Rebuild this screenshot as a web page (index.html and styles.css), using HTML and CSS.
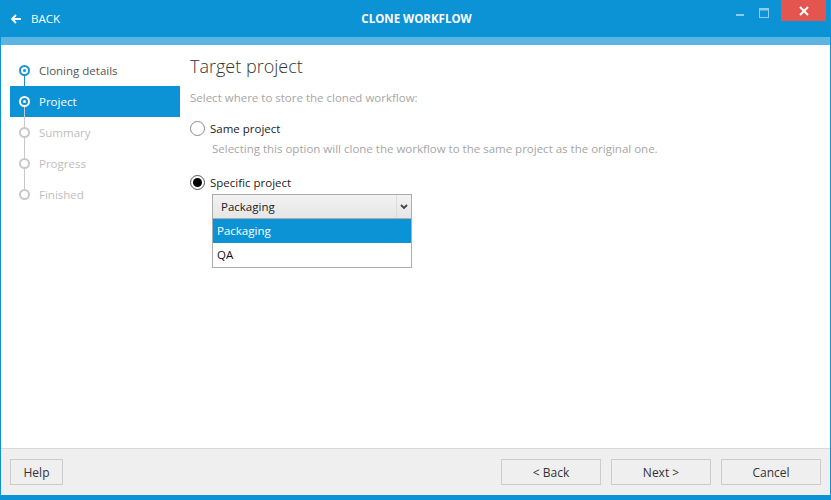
FILE: index.html
```html
<!DOCTYPE html>
<html>
<head>
<meta charset="utf-8">
<link rel="stylesheet" href="styles.css">
</head>
<body>
<div class="window">
  <header class="titlebar">
    <div class="back">
      <svg class="back-arrow" width="11" height="10" viewBox="0 0 11 10"><path d="M5 1 L1 5 L5 9 M1 5 H10" fill="none" stroke="#fff" stroke-width="1.8"/></svg>
      <span>BACK</span>
    </div>
    <div class="title">CLONE WORKFLOW</div>
    <div class="controls">
      <span class="ctl min"><svg width="8" height="3" viewBox="0 0 8 3"><rect x="0" y="0" width="8" height="2" fill="#8fcbed"/></svg></span>
      <span class="ctl max"><svg width="10" height="10" viewBox="0 0 10 10"><rect x="0.5" y="0.5" width="9" height="9" fill="none" stroke="#8fcbed" stroke-width="1"/><rect x="0.5" y="0.5" width="9" height="2" fill="#8fcbed"/></svg></span>
      <span class="ctl close"><svg width="10" height="10" viewBox="0 0 10 10"><path d="M1 1 L9 9 M9 1 L1 9" stroke="#fff" stroke-width="2"/></svg></span>
    </div>
  </header>
  <div class="strip"></div>
  <div class="body">
    <nav class="steps">
      <div class="step done"><span class="dot"></span><span class="label">Cloning details</span></div>
      <div class="step current"><span class="dot"></span><span class="label">Project</span></div>
      <div class="step todo"><span class="dot"></span><span class="label">Summary</span></div>
      <div class="step todo"><span class="dot"></span><span class="label">Progress</span></div>
      <div class="step todo last"><span class="dot"></span><span class="label">Finished</span></div>
    </nav>
    <main class="main">
      <h1 class="heading">Target project</h1>
      <p class="hint">Select where to store the cloned workflow:</p>
      <label class="radio"><span class="rb"></span><span>Same project</span></label>
      <p class="desc">Selecting this option will clone the workflow to the same project as the original one.</p>
      <label class="radio second"><span class="rb checked"></span><span>Specific project</span></label>
      <div class="combo">
        <div class="combo-box">
          <span class="combo-value">Packaging</span>
          <span class="combo-toggle"><svg width="8" height="6" viewBox="0 0 8 6"><path d="M1 1 L4 4 L7 1" fill="none" stroke="#444" stroke-width="1.8"/></svg></span>
        </div>
        <ul class="combo-list">
          <li class="sel">Packaging</li>
          <li>QA</li>
        </ul>
      </div>
    </main>
  </div>
  <footer class="footer">
    <button class="btn help">Help</button>
    <div class="nav-btns">
      <button class="btn wide">&lt; Back</button>
      <button class="btn wide">Next &gt;</button>
      <button class="btn wide">Cancel</button>
    </div>
  </footer>
</div>
</body>
</html>
```

FILE: styles.css
```css
* { box-sizing: border-box; }
html, body { margin: 0; padding: 0; }
body {
  width: 831px;
  height: 500px;
  font-family: "Segoe UI", "Open Sans", "Noto Sans", sans-serif;
  font-size: 11.5px;
  color: #333;
  overflow: hidden;
}
.window {
  width: 831px;
  height: 500px;
  display: flex;
  flex-direction: column;
  background: #0b93d5;
  padding: 0 1px 5px 1px;
}
.titlebar {
  height: 37px;
  display: grid;
  grid-template-columns: 1fr auto 1fr;
  align-items: start;
  color: #fff;
}
.back {
  display: flex;
  align-items: center;
  gap: 9px;
  height: 37px;
  padding-left: 10px;
  font-size: 11.5px;
}
.title {
  text-align: center;
  font-weight: bold;
  font-size: 11.5px;
  line-height: 37px;
  padding-left: 2px;
}
.controls {
  display: flex;
  justify-content: flex-end;
  align-items: flex-start;
  height: 37px;
  margin-right: 4px;
}
.ctl {
  display: flex;
  align-items: center;
  justify-content: center;
}
.ctl.min { width: 16px; height: 21px; align-items: flex-end; padding-bottom: 4px; margin-right: 8px; }
.ctl.max { width: 16px; height: 21px; padding-top: 5px; margin-right: 9px; }
.ctl.close { width: 45px; height: 21px; background: #e5554f; }
.strip { height: 8px; background: #5ab5e3; }
.body {
  flex: 1;
  display: flex;
  background: #fff;
}
.steps {
  width: 179px;
  padding: 10px 0 0 9px;
  display: flex;
  flex-direction: column;
}
.step {
  height: 31px;
  display: flex;
  align-items: center;
  position: relative;
  padding-left: 9px;
}
.step .dot {
  width: 11px;
  height: 11px;
  border-radius: 50%;
  border: 2px solid #1a93d4;
  background: #fff;
  position: relative;
  z-index: 1;
  display: flex;
  align-items: center;
  justify-content: center;
}
.step .dot::after {
  content: "";
  width: 3px;
  height: 3px;
  border-radius: 50%;
  background: #1a93d4;
}
.step::before {
  content: "";
  position: absolute;
  left: 14px;
  top: 20px;
  height: 31px;
  width: 1px;
  background: #c8c8c8;
}
.step.done::before { background: #1a93d4; }
.step.last::before { display: none; }
.step .label { margin-left: 9px; }
.step.done .label { color: #555; }
.step.current { background: #0b93d5; }
.step.current .label { color: #fff; }
.step.current .dot { border-color: #fff; background: #0b93d5; }
.step.current .dot::after { background: #fff; }
.step.todo .label { color: #bdbdbd; }
.step.todo .dot { border-color: #c8c8c8; }
.step.todo .dot::after { display: none; }
.main {
  flex: 1;
  padding: 8px 0 0 10px;
}
.heading {
  margin: 0;
  font-weight: 300;
  font-size: 18px;
  line-height: 26px;
  color: #333;
}
.hint {
  margin: 11px 0 0 0;
  color: #a6a6a6;
  line-height: 16px;
}
.radio {
  display: flex;
  align-items: center;
  margin-top: 14px;
  height: 16px;
  color: #222;
}
.radio.second { margin-top: 17px; }
.rb {
  width: 15px;
  height: 15px;
  border: 1px solid #8a8a8a;
  border-radius: 50%;
  margin-right: 5px;
  background: #fff;
  display: flex;
  align-items: center;
  justify-content: center;
}
.rb.checked { border-color: #555; }
.rb.checked::after {
  content: "";
  width: 9px;
  height: 9px;
  border-radius: 50%;
  background: #000;
}
.desc {
  margin: 5px 0 0 22px;
  color: #a6a6a6;
  line-height: 16px;
}
.combo {
  margin: 4px 0 0 22px;
  width: 200px;
}
.combo-box {
  height: 25px;
  border: 1px solid #acacac;
  background: linear-gradient(#f2f2f2, #e6e6e6);
  display: flex;
  align-items: center;
}
.combo-value { flex: 1; padding-left: 8px; color: #222; }
.combo-toggle {
  width: 15px;
  height: 23px;
  border-left: 1px solid #dcdcdc;
  display: flex;
  align-items: center;
  justify-content: center;
}
.combo-list {
  list-style: none;
  margin: 0;
  padding: 0;
  border: 1px solid #acacac;
  border-top: none;
  background: #fff;
}
.combo-list li {
  height: 24px;
  line-height: 24px;
  padding-left: 4px;
  color: #111;
}
.combo-list li.sel { background: #0b93d5; color: #fff; }
.footer {
  height: 47px;
  background: #efefef;
  border-top: 1px solid #d9d9d9;
  display: flex;
  align-items: flex-start;
  justify-content: space-between;
  padding: 10px 9px 0 9px;
}
.nav-btns { display: flex; gap: 10px; }
.btn {
  height: 26px;
  border: 1px solid #cccccc;
  background: #efefef;
  font-family: inherit;
  font-size: 12px;
  color: #333;
  padding: 0;
}
.btn.help { width: 53px; }
.btn.wide { width: 100px; }
```
